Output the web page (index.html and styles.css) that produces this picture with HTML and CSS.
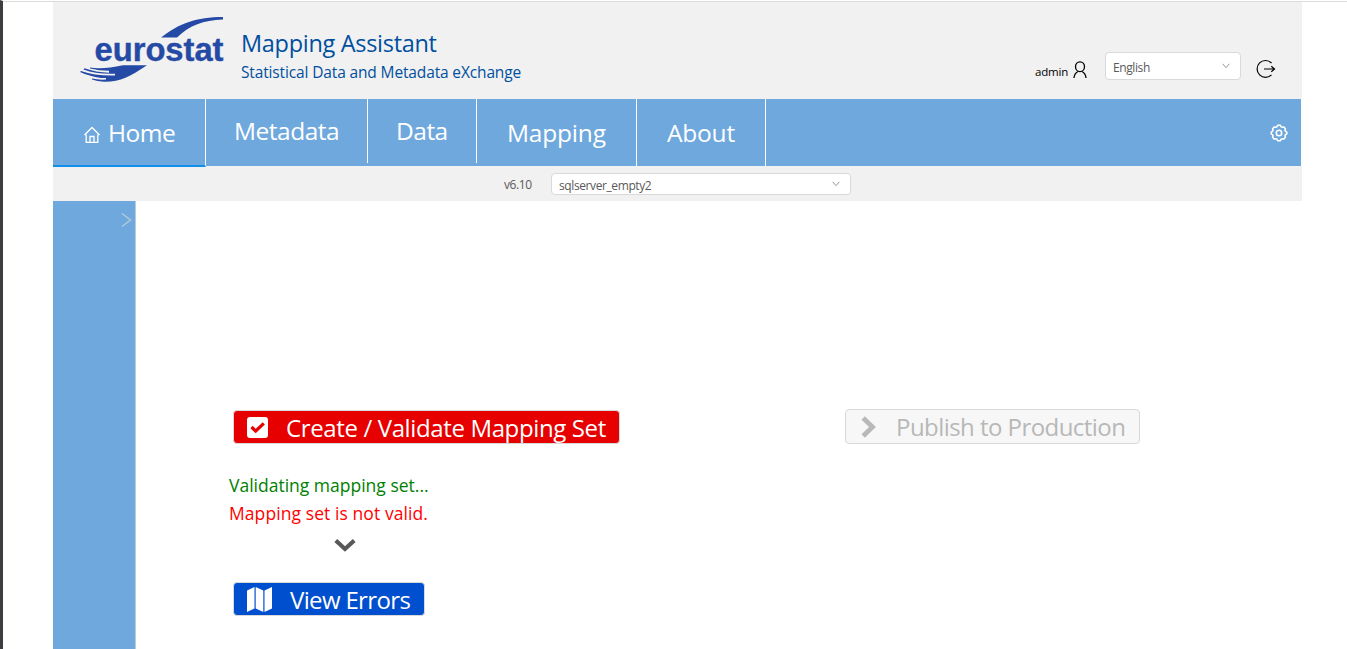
FILE: index.html
```
<!DOCTYPE html>
<html lang="en">
<head>
<meta charset="utf-8">
<title>Mapping Assistant</title>
<link rel="stylesheet" href="styles.css">
</head>
<body>
<div class="app">
  <header class="header">
    <svg class="logo" width="150" height="72" viewBox="78 14 150 72">
      <path d="M161 37.5C180 23 196 17.2 223 17V19.5C203 20.500 190 25 177 37.500Z" fill="#254aa5"/>
      <text x="94.500" y="61" textLength="129" lengthAdjust="spacingAndGlyphs" class="logo-text">eurostat</text>
      <path d="M90 67.500Q103 69.500 123 65.300H147C129 77 121 82 104 81.800Q97 81.500 92 79.500V78.500Q98 80 106 79.500V78H101Q89 76 80 72L81 71Q95 76 115 75.500V73.700Q97 74.500 83.500 69.500L84.500 68.300Q96 72.500 109 72.700V70.800Q99 70.800 90 68.500Z" fill="#254aa5"/>
    </svg>
    <div class="titles">
      <h1 class="title">Mapping Assistant</h1>
      <p class="subtitle">Statistical Data and Metadata eXchange</p>
    </div>
    <div class="account">
      <span class="user">admin</span>
      <svg class="user-icon" width="14" height="18" viewBox="0 0 14 18" fill="none" stroke="#000" stroke-width="1.300"><ellipse cx="7" cy="5.700" rx="4.500" ry="4.900"/><path d="M1 17Q1.300 12.500 5 10.500M13 17Q12.700 12.500 9 10.500"/></svg>
      <div class="select language"><span>English</span><svg width="8" height="6" viewBox="0 0 8 6"><path d="M.7 .8L4 4.700L7.300 .8"/></svg></div>
      <svg class="logout" width="20" height="20" viewBox="0 0 20 20" fill="none" stroke="#000" stroke-width="1.200"><path d="M15.500 4A8.400 8.400 0 1 0 15.500 15.800M8 10H18.500M15.300 7.300L18.500 10L15.300 12.700"/></svg>
    </div>
  </header>
  <nav class="nav">
    <a class="tab home"><svg width="16" height="18" viewBox="0 0 16 18" fill="none" stroke="#fff" stroke-width="1.300"><path d="M.5 9L8 1.500L15.500 9M2.200 8.500V16.300H13.800V8.500M6 16V10.500H10V16"/></svg><span>Home</span></a>
    <a class="tab metadata short"><span>Metadata</span></a>
    <a class="tab data short"><span>Data</span></a>
    <a class="tab mapping"><span>Mapping</span></a>
    <a class="tab about"><span>About</span></a>
    <svg class="settings" width="18" height="18" viewBox="0 0 18 18" fill="none" stroke="#fff" stroke-width="1.600"><path d="M7 2.700L7.700 1.300H10.300L11 2.700L12.300 3.200L14 3L15.400 4.800L15 6.200L15.500 7.300L16.800 8.200V9.800L15.500 10.700L15 11.800L15.400 13.200L14 15L12.300 14.800L11 15.300L10.300 16.700H7.700L7 15.300L5.700 14.800L4 15L2.600 13.200L3 11.800L2.500 10.700L1.200 9.800V8.200L2.500 7.300L3 6.200L2.600 4.800L4 3L5.700 3.200Z"/><circle cx="9" cy="9" r="2.700"/></svg>
  </nav>
  <div class="toolbar">
    <span class="version">v6.10</span>
    <div class="select store"><span>sqlserver_empty2</span><svg width="8" height="6" viewBox="0 0 8 6"><path d="M.7 .8L4 4.700L7.300 .8"/></svg></div>
  </div>
  <div class="body">
    <aside class="sidebar"><svg width="11" height="16" viewBox="0 0 11 16"><path d="M1 1.500L9.500 8L1 14.500" fill="none" stroke="#b5c9d8" stroke-width="1.400"/></svg></aside>
    <main class="main">
      <section class="validate">
        <button class="button create"><svg width="21" height="21" viewBox="0 0 21 21"><rect width="21" height="21" rx="3" fill="#fff"/><path d="M4.500 10L8.700 14L16.800 6.300" fill="none" stroke="#e60000" stroke-width="3.200"/></svg><span>Create / Validate Mapping Set</span></button>
        <div class="messages">
          <p class="message ok"><span>Validating mapping set...</span></p>
          <p class="message bad"><span>Mapping set is not valid.</span></p>
        </div>
        <svg class="down" width="22" height="14" viewBox="0 0 22 14"><path d="M1.800 2.500L11 11L20.200 2.500" fill="none" stroke="#595959" stroke-width="4.200"/></svg>
        <button class="button errors"><svg width="25" height="25" viewBox="0 0 25 25"><path d="M0 3.500L7.500 0V21.500L0 25ZM8.700 0L16.300 3.500V25L8.700 21.500ZM17.500 3.500L25 0V21.500L17.500 25Z" fill="#fff"/></svg><span>View Errors</span></button>
      </section>
      <section class="publish">
        <button class="button production" disabled><svg width="15" height="22" viewBox="0 0 15 22"><path d="M2.200 2L11.500 11L2.200 20" fill="none" stroke="#b8b8b8" stroke-width="4.700"/></svg><span>Publish to Production</span></button>
      </section>
    </main>
  </div>
</div>
</body>
</html>
```
FILE: styles.css
```
* { box-sizing: border-box; }
body {
  margin: 0;
  height: 649px;
  overflow: hidden;
  background: #fff;
  border-top: 1px solid #fff;
  border-left: 3px solid #3b3d40;
  font-family: "Open Sans", "Noto Sans", sans-serif;
  color: #595959;
}
h1, p { margin: 0; font-weight: 400; }
span { white-space: nowrap; }
svg { flex: none; }
.app {
  height: 648px;
  padding: 0 45px 0 50px;
  border-top: 1px solid #dcdcdc;
  display: flex;
  flex-direction: column;
}
.header {
  height: 97px;
  flex: none;
  background: #f1f1f1;
  display: flex;
  align-items: flex-start;
}
.logo { margin: 12px 0 0 25px; }
.logo-text { font: bold 33px "Liberation Sans", sans-serif; fill: #254aa5; stroke: #254aa5; stroke-width: 0.4px; }
.titles { margin: 24px 0 0 13px; color: #004f9f; }
.title { font-size: 23.500px; line-height: 34px; letter-spacing: -0.3px; }
.subtitle { font-size: 15.500px; line-height: 24px; letter-spacing: -0.14px; }
.account { margin-left: auto; display: flex; align-items: flex-start; padding-right: 26px; }
.user { font-size: 11.500px; line-height: 18px; margin: 61px 5px 0 0; color: #000; letter-spacing: -0.2px; }
.user-icon { margin: 59px 18px 0 0; }
.select {
  background: #fff;
  border: 1px solid #d9d9d9;
  border-radius: 4px;
  display: flex;
  align-items: center;
  justify-content: space-between;
  font-size: 12px;
}
.select span { padding-top: 2px; letter-spacing: -0.4px; }
.select svg { fill: none; stroke: #999; stroke-width: 1; }
.language { width: 136px; height: 28px; margin: 50px 15px 0 0; padding: 0 10px 0 7px; }
.logout { margin-top: 57px; }
.nav { height: 67px; flex: none; margin-right: 1px; background: #6fa8dd; display: flex; position: relative; }
.tab { height: 67px; display: flex; border-right: 1px solid #fff; color: #fff; font-size: 24.500px; line-height: 34px; padding: 17px 0 0 30px; letter-spacing: -0.2px; }
.home { width: 153px; height: 68px; border-bottom: 2px solid #108ee9; gap: 8px; padding-left: 31px; letter-spacing: -0.5px; }
.home svg { margin-top: 10px; }
.short { height: 64px; padding-top: 15px; }
.metadata { width: 162px; padding-left: 28px; letter-spacing: -0.5px; }
.data { width: 109px; padding-left: 28px; letter-spacing: -0.5px; }
.mapping { width: 160px; }
.about { width: 129px; }
.settings { margin: 25px 13px 0 auto; }
.toolbar { height: 35px; flex: none; background: #f1f1f1; display: flex; padding-left: 451px; }
.version { width: 47px; font-size: 12px; line-height: 18px; margin-top: 10px; letter-spacing: -0.4px; }
.store { width: 300px; height: 22px; margin-top: 7px; padding: 0 10px 0 7px; }
.body { flex: 1; display: flex; }
.sidebar { width: 83px; background: #6fa8dd; border-right: 1px solid #b8cbdc; padding: 11px 3px 0 0; display: flex; justify-content: flex-end; }
.main { flex: 1; display: flex; padding-left: 93px; }
.validate { width: 616px; padding: 209px 0 0 4px; display: flex; flex-direction: column; align-items: flex-start; }
.button { display: flex; align-items: center; height: 34px; padding: 0 13px; border: 1px solid #d9d9d9; border-radius: 4px; font: 24px "Open Sans", "Noto Sans", sans-serif; color: #fff; }
.create { width: 387px; background: #e60000; gap: 18px; letter-spacing: -0.37px; }
.messages { margin: 27px 0 0 -4px; }
.message { font-size: 17.500px; line-height: 28px; }
.ok { color: #008000; }
.bad { color: #f00; letter-spacing: 0.08px; }
.down { margin: 11px 0 0 101px; }
.errors { width: 192px; margin-top: 30px; background: #004fce; gap: 18px; letter-spacing: -0.65px; }
.publish { padding-top: 208px; }
.production { width: 295px; height: 35px; background: #f7f7f7; color: #b8b8b8; padding-left: 15px; gap: 20px; letter-spacing: -0.55px; }
```
